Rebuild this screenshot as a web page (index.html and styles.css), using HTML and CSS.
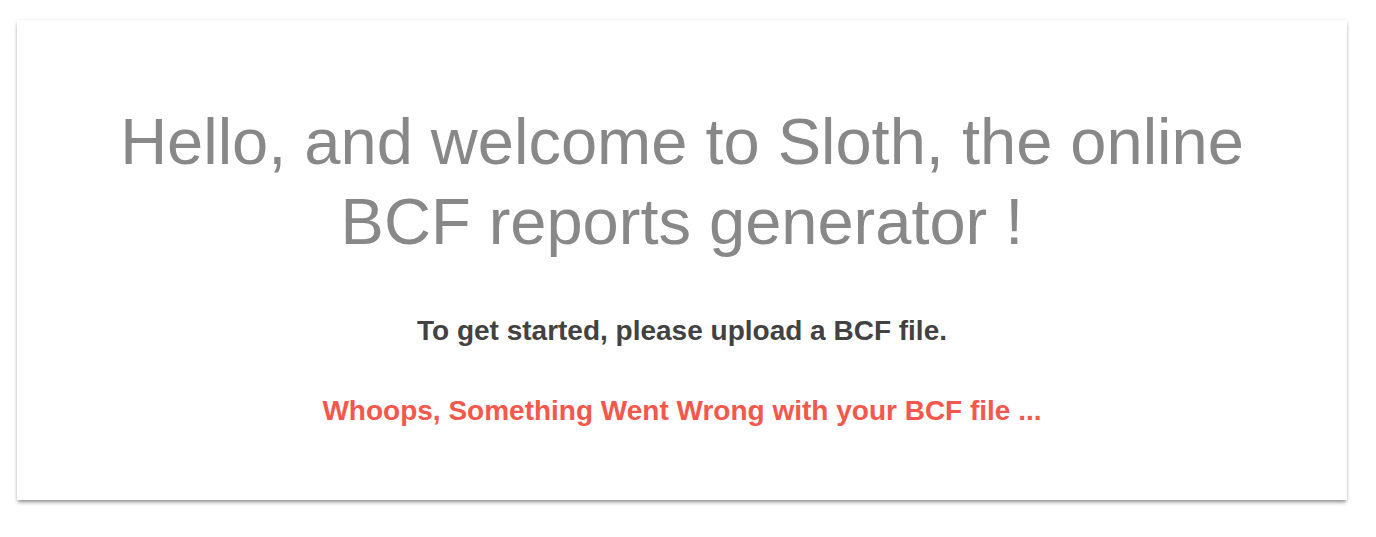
FILE: index.html
```html
<!DOCTYPE html>
<html lang="en">
<head>
<meta charset="utf-8">
<title>Sloth - BCF reports generator</title>
<link rel="stylesheet" href="styles.css">
</head>
<body>
  <main class="page">
    <section class="card">
      <h1 class="welcome">Hello, and welcome to Sloth, the online BCF reports generator !</h1>
      <p class="lead">To get started, please upload a BCF file.</p>
      <p class="error">Whoops, Something Went Wrong with your BCF file ...</p>
    </section>
  </main>
</body>
</html>
```

FILE: styles.css
```css
html, body {
  margin: 0;
  padding: 0;
  background: #ffffff;
  font-family: "Liberation Sans", Arial, sans-serif;
}

body {
  min-height: 100vh;
}

.page {
  padding: 20px 29px 37px 17px;
}

.card {
  background: #ffffff;
  box-shadow: 0 3px 4px -1px rgba(0, 0, 0, 0.45), 0 0 3px 0 rgba(0, 0, 0, 0.08);
  padding: 82px 90px 73px;
  text-align: center;
}

.welcome {
  margin: 0;
  font-size: 65px;
  font-weight: 400;
  line-height: 80px;
  color: #888888;
}

.lead {
  margin: 53px 0 0;
  font-size: 28px;
  font-weight: 700;
  line-height: normal;
  color: #424242;
}

.error {
  margin: 48px 0 0;
  font-size: 28px;
  font-weight: 700;
  line-height: normal;
  color: #f4574c;
}
```
